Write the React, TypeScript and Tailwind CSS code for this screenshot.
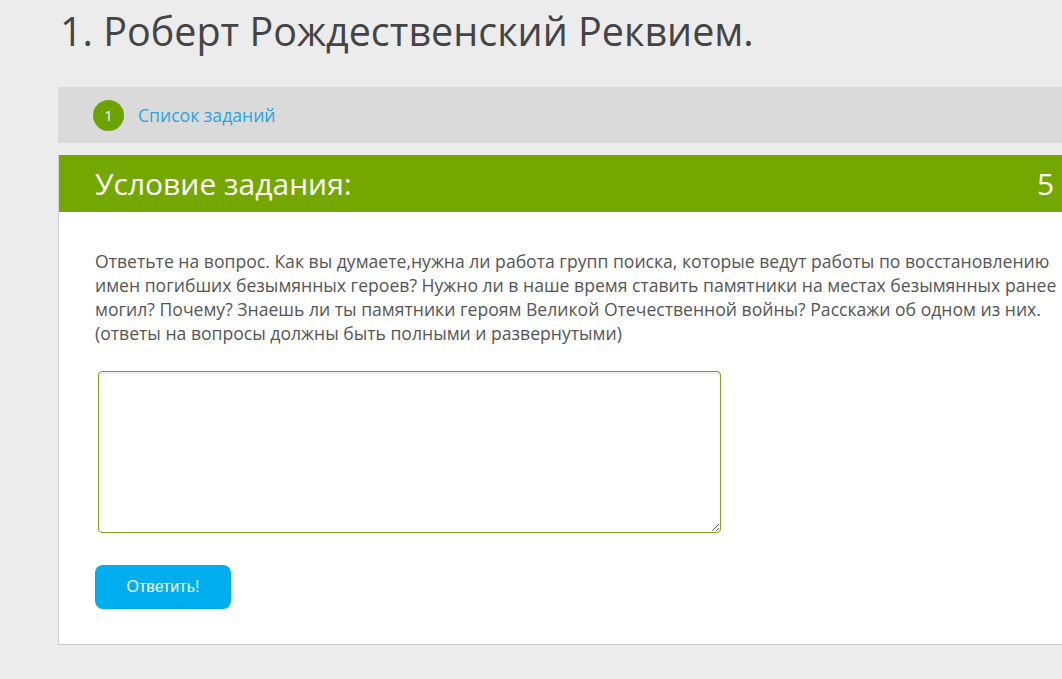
const App = () => {
    return (
        <div className="min-h-[679px] w-full overflow-hidden bg-[#ececec]" style={{ fontFamily: '"Open Sans", sans-serif' }}>
            <div className="w-[1202px] pl-[58px]">
                <h1 className="pl-[2px] pt-[6px] text-[39.5px] leading-[50px] text-[#444]">
                    1. Роберт Рождественский Реквием.
                </h1>
                <div className="mt-[31px] flex h-[56px] items-center bg-[#dadada] pl-[35px]">
                    <span className="flex h-[31px] w-[31px] items-center justify-center rounded-full bg-[#6ea200] text-[14px] text-white">
                        1
                    </span>
                    <a className="ml-[14px] text-[17.6px] text-[#2ea3dc]">Список заданий</a>
                </div>
                <div className="mt-[12px] border-b border-l border-[#cfcfcf] bg-white">
                    <div className="flex h-[57px] items-center justify-between bg-[#74a800] pl-[36px] pr-[36px] text-white">
                        <span className="text-[30px]">Условие задания:</span>
                        <span className="text-[30px]">5 баллов</span>
                    </div>
                    <div className="pb-[35px] pl-[36px] pt-[37px]">
                        <p className="w-[975px] text-[17.6px] leading-[24px] text-[#555]">
                            Ответьте на вопрос. Как вы думаете,нужна ли работа групп поиска, которые ведут работы по восстановлению имен погибших безымянных героев? Нужно ли в наше время ставить памятники на местах безымянных ранее могил? Почему? Знаешь ли ты памятники героям Великой Отечественной войны? Расскажи об одном из них. (ответы на вопросы должны быть полными и развернутыми)
                        </p>
                        <textarea className="ml-[3px] mt-[26px] block h-[162px] w-[623px] rounded-[4px] border border-[#7fa21c] bg-white shadow-[inset_0_2px_3px_rgba(0,0,0,0.08)] outline-none" />
                        <button className="mt-[32px] flex h-[44px] w-[136px] items-center justify-center rounded-[8px] bg-[#00aeef] text-[16px] text-white" style={{ fontFamily: '"Liberation Sans", Arial, sans-serif' }}>
                            Ответить!
                        </button>
                    </div>
                </div>
            </div>
        </div>
    );
};

export default App;
